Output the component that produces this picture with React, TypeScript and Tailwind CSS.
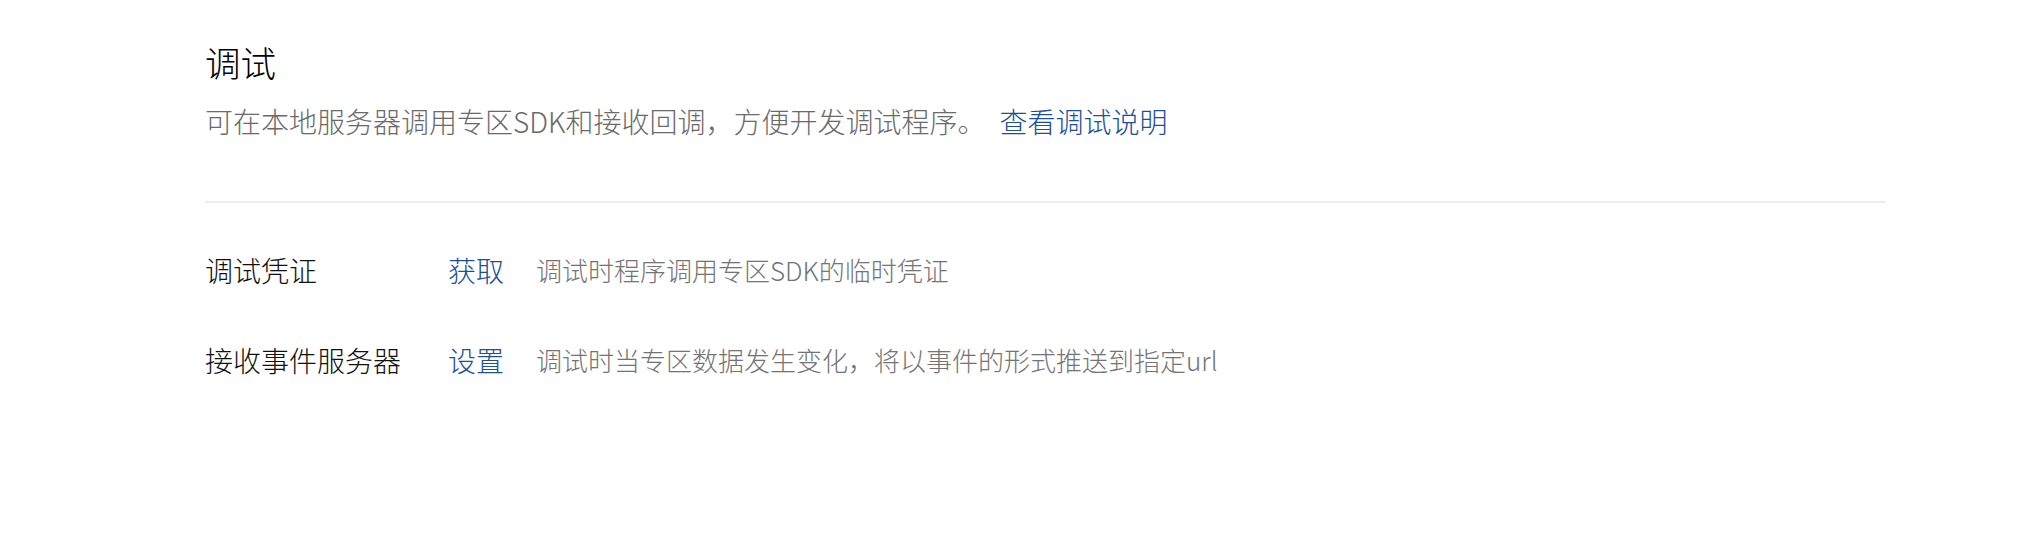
export default function App() {
  const rows = [
    { label: "调试凭证", action: "获取", desc: "调试时程序调用专区SDK的临时凭证" },
    { label: "接收事件服务器", action: "设置", desc: "调试时当专区数据发生变化，将以事件的形式推送到指定url" },
  ];
  return (
    <div
      className="w-[2024px] h-[539px] bg-white pl-[205px] pt-[38px] font-light"
      style={{ fontFamily: '"Noto Sans CJK SC", "Noto Sans", sans-serif' }}
    >
      <div className="w-[1680px]">
        <h1 className="text-[35.5px] leading-[48px] text-[#000000] font-light">调试</h1>
        <p className="mt-[15px] text-[28px] leading-[40px] text-[#6a6a6a] whitespace-nowrap">
          可在本地服务器调用专区SDK和接收回调，方便开发调试程序。
          <a className="ml-[14px] text-[#1b4f96] cursor-pointer">查看调试说明</a>
        </p>
        <div className="mt-[60px] h-[2px] bg-[#ececec]" />
        <div className="mt-[47px] flex flex-col gap-[50px]">
          {rows.map((r) => (
            <div key={r.label} className="flex items-center leading-[40px]">
              <div className="w-[243px] text-[28px] text-[#111111]">{r.label}</div>
              <a className="w-[88px] text-[28px] text-[#1b4f96] cursor-pointer">{r.action}</a>
              <div className="text-[26px] text-[#747474]">{r.desc}</div>
            </div>
          ))}
        </div>
      </div>
    </div>
  );
}
